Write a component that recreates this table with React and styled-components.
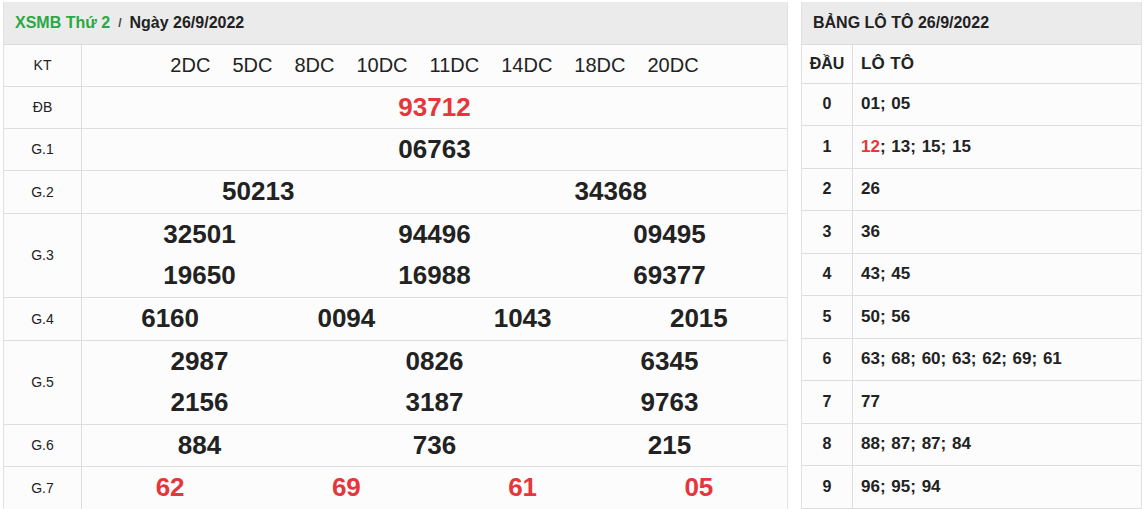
import React from 'react'
import styled, { createGlobalStyle } from 'styled-components'

const GlobalStyle = createGlobalStyle`
  html, body {
    margin: 0;
    padding: 0;
    background: #fff;
  }
  body {
    font-family: "Liberation Sans", Arial, sans-serif;
    color: #222;
  }
`

const prizes = [
  { label: 'ĐB', rows: [['93712']], red: true, cols: 1, h: 42 },
  { label: 'G.1', rows: [['06763']], cols: 1, h: 42 },
  { label: 'G.2', rows: [['50213', '34368']], cols: 2, h: 43 },
  { label: 'G.3', rows: [['32501', '94496', '09495'], ['19650', '16988', '69377']], cols: 3, h: 84 },
  { label: 'G.4', rows: [['6160', '0094', '1043', '2015']], cols: 4, h: 43 },
  { label: 'G.5', rows: [['2987', '0826', '6345'], ['2156', '3187', '9763']], cols: 3, h: 84 },
  { label: 'G.6', rows: [['884', '736', '215']], cols: 3, h: 42 },
  { label: 'G.7', rows: [['62', '69', '61', '05']], red: true, cols: 4, h: 43 },
]

const codes = ['2DC', '5DC', '8DC', '10DC', '11DC', '14DC', '18DC', '20DC']

const loto = [
  ['0', ['01', '05']],
  ['1', ['12', '13', '15', '15'], '12'],
  ['2', ['26']],
  ['3', ['36']],
  ['4', ['43', '45']],
  ['5', ['50', '56']],
  ['6', ['63', '68', '60', '63', '62', '69', '61']],
  ['7', ['77']],
  ['8', ['88', '87', '87', '84']],
  ['9', ['96', '95', '94']],
]

const App = () => {
  return (
    <Page>
      <GlobalStyle />
      <Panel $width={785}>
        <Header>
          <Green>XSMB Thứ 2</Green>
          <Slash>/</Slash>
          <span>Ngày 26/9/2022</span>
        </Header>
        <Table>
          <tbody>
            <Row $h={41}>
              <Label>KT</Label>
              <Cell>
                <Codes>
                  {codes.map((c) => (
                    <span key={c}>{c}</span>
                  ))}
                </Codes>
              </Cell>
            </Row>
            {prizes.map((p) => (
              <Row key={p.label} $h={p.h}>
                <Label>{p.label}</Label>
                <Cell>
                  {p.rows.map((r, i) => (
                    <NumRow key={i} $cols={p.cols}>
                      {r.map((n, j) => (
                        <Num key={j} $red={p.red}>
                          {n}
                        </Num>
                      ))}
                    </NumRow>
                  ))}
                </Cell>
              </Row>
            ))}
          </tbody>
        </Table>
      </Panel>
      <Panel $width={341}>
        <Header>BẢNG LÔ TÔ 26/9/2022</Header>
        <Table>
          <tbody>
            <Row $h={38}>
              <Head>ĐẦU</Head>
              <LotoCell>LÔ TÔ</LotoCell>
            </Row>
            {loto.map(([d, nums, hot], idx) => (
              <Row key={d} $h={idx % 2 === 0 ? 42 : 43}>
                <Head>{d}</Head>
                <LotoCell>
                  {nums.map((n, i) => (
                    <React.Fragment key={i}>
                      {i > 0 && '; '}
                      {n === hot && i === 0 ? <Hot>{n}</Hot> : n}
                    </React.Fragment>
                  ))}
                </LotoCell>
              </Row>
            ))}
          </tbody>
        </Table>
      </Panel>
    </Page>
  )
}

export default App

const Page = styled.div`
  display: flex;
  align-items: flex-start;
  gap: 13px;
  padding: 2px 4px 0 3px;
  height: 509px;
  box-sizing: border-box;
  overflow: hidden;
`

const Panel = styled.div`
  width: ${(p) => p.$width}px;
  flex: none;
  border-left: 1px solid #e2e2e2;
  border-right: 1px solid #e2e2e2;
  box-sizing: border-box;
  background: #fcfcfc;
`

const Header = styled.div`
  height: 43px;
  display: flex;
  align-items: center;
  gap: 8px;
  padding: 0 11px 1px;
  background: #ebebeb;
  border-bottom: 1px solid #dcdcdc;
  box-sizing: border-box;
  font-size: 16px;
  font-weight: bold;
  color: #222;
`

const Green = styled.span`
  color: #2aa845;
`

const Slash = styled.span`
  font-size: 12px;
  color: #444;
`

const Table = styled.table`
  width: 100%;
  border-collapse: collapse;
  table-layout: fixed;
`

const Row = styled.tr`
  height: ${(p) => p.$h}px;
  border-bottom: 1px solid #dedede;
`

const Label = styled.td`
  width: 77px;
  text-align: center;
  font-size: 14px;
  color: #222;
  border-right: 1px solid #dedede;
  padding: 0;
`

const Cell = styled.td`
  padding: 0;
  vertical-align: middle;
`

const Codes = styled.div`
  display: flex;
  justify-content: center;
  gap: 22px;
  font-size: 20px;
  color: #222;
`

const NumRow = styled.div`
  display: grid;
  grid-template-columns: repeat(${(p) => p.$cols}, 1fr);
  height: 41px;
  align-items: center;
`

const Num = styled.div`
  text-align: center;
  font-size: 26px;
  font-weight: bold;
  color: ${(p) => (p.$red ? '#e5373b' : '#222')};
`

const Head = styled.td`
  width: 50px;
  text-align: center;
  font-size: 16px;
  font-weight: bold;
  border-right: 1px solid #dedede;
  padding: 0;
`

const LotoCell = styled.td`
  padding: 0 0 0 8px;
  font-size: 17px;
  font-weight: bold;
  word-spacing: 1px;
`

const Hot = styled.span`
  color: #e5373b;
`
